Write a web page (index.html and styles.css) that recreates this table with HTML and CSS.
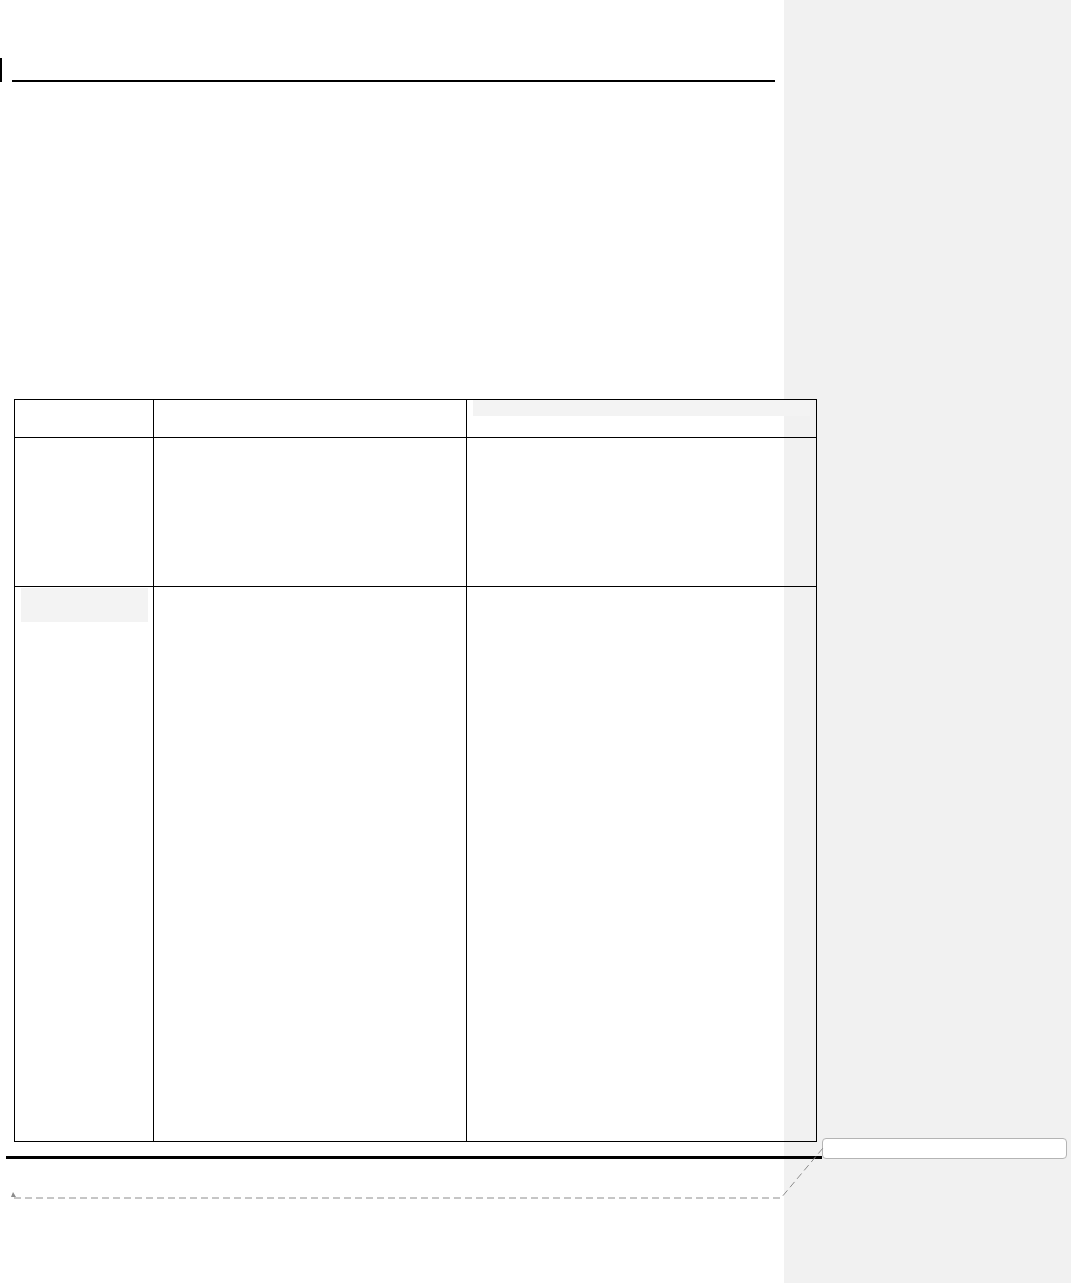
FILE: index.html
```html
<!DOCTYPE html>
<html lang="en">
<head>
    <meta charset="UTF-8">
    <meta name="viewport" content="width=device-width, initial-scale=1.0">
    <title>Document</title>
    <link rel="stylesheet" href="styles.css">
</head>
<body>
    <div class="page">
        <div class="header">
            <span class="change-mark"></span>
            <span class="header-rule"></span>
        </div>

        <table class="doc-table">
            <colgroup>
                <col class="col-a">
                <col class="col-b">
                <col class="col-c">
            </colgroup>
            <tr class="row-head">
                <td></td>
                <td></td>
                <td><div class="highlight highlight-wide"></div></td>
            </tr>
            <tr class="row-mid">
                <td></td>
                <td></td>
                <td></td>
            </tr>
            <tr class="row-long">
                <td><div class="highlight highlight-small"></div></td>
                <td></td>
                <td></td>
            </tr>
        </table>

        <div class="footer">
            <span class="footer-rule"></span>
            <div class="comment-box"></div>
        </div>

        <!-- comment anchor connector -->
        <svg class="connector" width="840" height="80" viewBox="0 0 840 80">
            <path d="M11 57 L16 57 L13 52 Z" fill="#8c8c8c"/>
            <path d="M14 58 H781 L823 8" fill="none" stroke="#8c8c8c" stroke-width="1" stroke-dasharray="7 4"/>
        </svg>
    </div>
</body>
</html>
```

FILE: styles.css
```css
body {
    margin: 0;
    background-color: #ffffff;
}
.page {
    position: relative;
    min-height: 1283px;
    background: linear-gradient(to right, #ffffff 784px, #f1f1f1 784px);
}
.header {
    display: flex;
    align-items: flex-end;
    padding-top: 58px;
}
.change-mark {
    display: block;
    width: 2px;
    height: 24px;
    background-color: #000;
}
.header-rule {
    display: block;
    width: 763px;
    height: 2px;
    margin-left: 10px;
    background-color: #000;
}
.doc-table {
    margin: 317px 0 0 14px;
    width: 802px;
    border-collapse: collapse;
    table-layout: fixed;
}
.col-a { width: 139px; }
.col-b { width: 313px; }
.col-c { width: 350px; }
.doc-table td {
    border: 1px solid #000;
    padding: 0;
    vertical-align: top;
}
.row-head td { height: 37px; }
.row-mid td { height: 148px; }
.row-long td { height: 554px; }
.highlight {
    background-color: #f3f3f3;
}
.highlight-wide {
    margin-left: 6px;
    width: 337px;
    height: 16px;
}
.highlight-small {
    margin: 1px 0 0 6px;
    width: 127px;
    height: 34px;
}
.footer {
    display: flex;
    align-items: flex-end;
    margin-top: -4px;
}
.footer-rule {
    display: block;
    width: 816px;
    height: 3px;
    margin-left: 6px;
    background-color: #000;
}
.comment-box {
    width: 243px;
    height: 19px;
    background-color: #fff;
    border: 1px solid #b4b4b4;
    border-radius: 4px;
}
.connector {
    position: absolute;
    left: 0;
    top: 1140px;
}
```
